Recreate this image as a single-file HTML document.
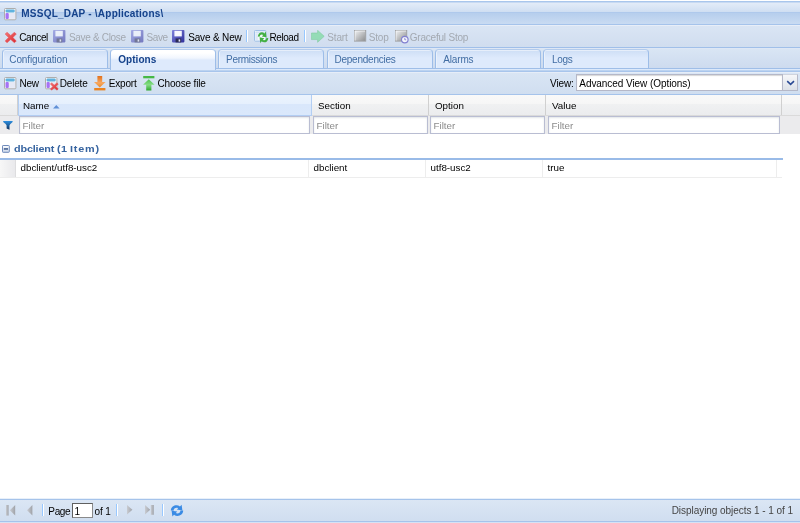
<!DOCTYPE html>
<html>
<head>
<meta charset="utf-8">
<title>MSSQL_DAP - \Applications\</title>
<style>
html,body{margin:0;padding:0;}
body{width:800px;height:523px;overflow:hidden;background:#fff;position:relative;font-family:"Liberation Sans",sans-serif;font-size:11px;color:#000;}
.abs{position:absolute;}
#wrap{position:absolute;left:0;top:0;width:800px;height:523px;will-change:transform;}
.t{position:absolute;white-space:nowrap;line-height:14px;height:14px;font-size:10px;}
.dis{color:#a3a9b1;}
#title{left:0;top:1px;width:800px;height:24px;box-sizing:border-box;border-top:1px solid #a9c6ec;border-bottom:1px solid #a5c3eb;background:linear-gradient(#c8daf2 0,#c8daf2 1px,#e3ecf8 1px,#cfdef2 10px,#afc9ec 10px,#afc9ec 11px,#b6ceed 11px,#c9dbf2 22px);}
#tb1{left:0;top:25px;width:800px;height:22px;background:linear-gradient(#e8eef8 0,#e8eef8 1px,#dae5f4 1px,#d0ddef 22px);border-bottom:1px solid #a0bfe9;box-sizing:content-box;}
#tabstrip{left:0;top:48px;width:800px;height:20px;background:linear-gradient(#dee7f5 0,#dee7f5 1px,#d9e5f4 1px,#cddbef 20px);}
#tabline{left:0;top:68px;width:800px;height:4px;background:linear-gradient(#9fbee8 0,#9fbee8 1px,#dce9fb 1px,#dce9fb 2px,#bcd3f0 2px,#bcd3f0 3px,#a8c5ec 3px,#a8c5ec 4px);}
.tab{position:absolute;top:49px;height:19px;width:106px;box-sizing:border-box;border:1px solid #9dbde8;border-top-color:#b3cbec;border-bottom:none;border-radius:4px 4px 0 0;background:linear-gradient(#e6eefa 0,#e6eefa 1px,#cfdff6 1px,#deeafc 8px,#deeafc 100%);box-shadow:inset 1px 0 0 #eaf1fb;}
.tab span{position:absolute;left:9px;top:2.5px;font-size:10px;line-height:14px;color:#416da3;white-space:nowrap;}
.tab.act{height:21px;background:linear-gradient(#fff 0,#fff 3px,#f1f6fe 8px,#deeafc 10px,#deeafc 100%);z-index:2;box-shadow:none;}
.tab.act span{font-weight:bold;color:#15428b;}
#tb2{left:0;top:72px;width:800px;height:23px;background:linear-gradient(#e6edf8 0,#e6edf8 1px,#d9e5f4 1px,#d0def0 22px);border-bottom:1px solid #a5c3eb;box-sizing:border-box;}
#hdr{left:0;top:95px;width:800px;height:21px;background:linear-gradient(#f9f9f9 0,#f6f6f6 9px,#f0f1f2 9px,#ebecee 20px);border-bottom:1px solid #dadada;box-sizing:border-box;}

.hc{position:absolute;top:0;height:20px;border-right:1px solid #d0d0d0;box-sizing:border-box;}
.hc span{position:absolute;left:6px;top:3.6px;font-size:9.8px;line-height:14px;white-space:nowrap;}
#frow{left:0;top:116px;width:800px;height:18px;background:#ebebed;}
.fi{position:absolute;top:0;height:18px;box-sizing:border-box;border:1px solid #b9bdd2;background:#fff;box-shadow:inset 0 1px 2px #e2e6e8;}
.fi span{position:absolute;left:2.5px;top:1.5px;font-size:9.8px;line-height:14px;color:#8c8c8c;}
#grp{left:0;top:141px;width:783px;height:19px;border-bottom:2px solid #99bbe8;box-sizing:border-box;}
#row{left:0;top:160px;width:782px;height:18px;border-bottom:1px solid #ededed;box-sizing:border-box;}
.c{position:absolute;top:0;height:17px;border-right:1px solid #ededed;box-sizing:border-box;}
.c span{position:absolute;left:4.5px;top:1px;font-size:9.8px;line-height:14px;white-space:nowrap;}
#pg{left:0;top:499px;width:800px;height:23px;background:linear-gradient(#dbe6f4,#d0def0);border-top:1px solid #a5c3ea;border-bottom:1px solid #a5c3eb;box-sizing:border-box;}
.sep{position:absolute;width:1px;height:14px;background:#98c8ff;border-right:1px solid #fff;}
</style>
</head>
<body>
<div id="wrap">
<div id="title" class="abs"></div>
<div id="tb1" class="abs"></div>
<div id="tabstrip" class="abs"></div>
<div id="tabline" class="abs"></div>
<div class="tab" style="left:2px"><span style="left:6.3px;letter-spacing:-0.11px">Configuration</span></div>
<div class="tab act" style="left:110px"><span style="left:7.2px;letter-spacing:0.05px">Options</span></div>
<div class="tab" style="left:218px"><span style="left:7.0px;letter-spacing:-0.29px">Permissions</span></div>
<div class="tab" style="left:327px"><span style="left:6.5px;letter-spacing:-0.24px">Dependencies</span></div>
<div class="tab" style="left:435px"><span style="left:7.2px;letter-spacing:-0.14px">Alarms</span></div>
<div class="tab" style="left:543px"><span style="left:7.9px;letter-spacing:-0.27px">Logs</span></div>
<div id="tb2" class="abs"></div>
<div id="hdr" class="abs">
  <div class="hc" style="left:0;width:18px"></div>
  <div class="hc" style="left:18px;width:294px;height:21px;background:linear-gradient(#ebf3fd 0,#e6f0fd 9px,#d9e7fb 9px,#dae8fb 20px);border-left:1px solid #b3cef3;border-bottom:1px solid #b3cef3;border-right-color:#b3cef3"><span style="left:4px">Name</span></div>
  <div class="hc" style="left:312px;width:117px"><span>Section</span></div>
  <div class="hc" style="left:429px;width:117px"><span>Option</span></div>
  <div class="hc" style="left:546px;width:236px"><span>Value</span></div>
</div>
<div id="frow" class="abs">
  <div class="fi" style="left:19px;width:291px"><span>Filter</span></div>
  <div class="fi" style="left:313px;width:115px"><span>Filter</span></div>
  <div class="fi" style="left:430px;width:115px"><span>Filter</span></div>
  <div class="fi" style="left:548px;width:232px"><span>Filter</span></div>
</div>
<div id="grp" class="abs"><span class="t" style="left:14px;top:1px;font-weight:bold;color:#3764a0;font-size:9.8px;letter-spacing:0.2px;word-spacing:-0.3px;transform:scaleX(1.105);transform-origin:0 0;"><span style="letter-spacing:-0.15px">dbclient</span> (1 <span style="letter-spacing:0.7px">Item)</span></span></div>
<div id="row" class="abs">
  <div class="c" style="left:0;width:16px;background:linear-gradient(90deg,#f7f7f7,#e9e9ec);border-right-color:#dddddf"></div>
  <div class="c" style="left:16px;width:293px"><span>dbclient/utf8-usc2</span></div>
  <div class="c" style="left:309px;width:117px"><span>dbclient</span></div>
  <div class="c" style="left:426px;width:117px"><span>utf8-usc2</span></div>
  <div class="c" style="left:543px;width:234px"><span>true</span></div>
</div>
<div id="pg" class="abs"></div>
<div class="abs" style="left:0;top:522px;width:800px;height:1px;background:#d5e2f5"></div>
<div class="abs" style="left:0;top:498px;width:800px;height:1px;background:#e8f0fa"></div>


<!-- icons -->
<svg width="0" height="0" style="position:absolute">
 <defs>
  <linearGradient id="gFl" x1="0" y1="0" x2="1" y2="1"><stop offset="0" stop-color="#7f83dc"/><stop offset="1" stop-color="#2f2f9c"/></linearGradient>
  <linearGradient id="gSq" x1="0" y1="0" x2="1" y2="1"><stop offset="0" stop-color="#f6f6f6"/><stop offset="1" stop-color="#808080"/></linearGradient>
  <linearGradient id="gX" x1="0" y1="0" x2="1" y2="1"><stop offset="0" stop-color="#f47a7a"/><stop offset="1" stop-color="#d9262c"/></linearGradient>
  <linearGradient id="gOr" x1="0" y1="0" x2="0" y2="1"><stop offset="0" stop-color="#e2701a"/><stop offset="0.6" stop-color="#f7a860"/><stop offset="1" stop-color="#e98a2c"/></linearGradient>
  <linearGradient id="gGr" x1="0" y1="0" x2="0" y2="1"><stop offset="0" stop-color="#4fc24f"/><stop offset="0.5" stop-color="#86dc86"/><stop offset="1" stop-color="#2fa82f"/></linearGradient>
  <linearGradient id="gFu" x1="0" y1="0" x2="0" y2="1"><stop offset="0" stop-color="#2d8fe0"/><stop offset="1" stop-color="#0e2f5c"/></linearGradient>
  <linearGradient id="gAr" x1="0" y1="0" x2="1" y2="0"><stop offset="0" stop-color="#c9ccd2"/><stop offset="1" stop-color="#9fa2a8"/></linearGradient>
  <linearGradient id="gBx" x1="0" y1="0" x2="0" y2="1"><stop offset="0" stop-color="#ffffff"/><stop offset="1" stop-color="#c9d6ea"/></linearGradient>
  
  
  
 </defs>
</svg>
<!-- title icon -->
<svg class="abs" style="left:4.4px;top:8.1px" width="13" height="13"><g><rect x="0.5" y="0.5" width="11.4" height="11.3" rx="0.9" fill="#f7f8fc" stroke="#adadad"/>
   <rect x="1.6" y="1.4" width="9.1" height="3.2" rx="1.1" fill="#5fb2de"/>
   <rect x="1.5" y="5" width="3.3" height="6" rx="1.1" fill="#a672f4"/>
   <rect x="5.3" y="5" width="5.7" height="5.9" fill="#e6e9f5"/></g></svg>
<!-- toolbar 1 -->
<svg class="abs" style="left:4.8px;top:31.5px" width="12" height="12"><g><path d="M2 0.2 L5.7 3.5 L9.4 0.2 L11.3 2.1 L7.9 5.5 L11.3 8.9 L9.4 10.8 L5.7 7.5 L2 10.8 L0.1 8.9 L3.5 5.5 L0.1 2.1 Z" fill="url(#gX)" stroke="#e8555a" stroke-width="0.5" stroke-linejoin="round"/></g></svg>
<svg class="abs" style="left:53.4px;top:29.6px;opacity:.58" width="13" height="13"><g><rect x="0" y="0" width="12.4" height="12.4" rx="0.8" fill="url(#gFl)"/>
   <rect x="2.4" y="0.8" width="7.4" height="5.6" fill="#f7f8ff"/>
   <rect x="3.6" y="8.4" width="5.6" height="4" fill="#2b2b55"/>
   <rect x="6.6" y="9.4" width="1.6" height="2.2" fill="#e8e8f8"/></g></svg>
<svg class="abs" style="left:131px;top:29.6px;opacity:.58" width="13" height="13"><g><rect x="0" y="0" width="12.4" height="12.4" rx="0.8" fill="url(#gFl)"/>
   <rect x="2.4" y="0.8" width="7.4" height="5.6" fill="#f7f8ff"/>
   <rect x="3.6" y="8.4" width="5.6" height="4" fill="#2b2b55"/>
   <rect x="6.6" y="9.4" width="1.6" height="2.2" fill="#e8e8f8"/></g></svg>
<svg class="abs" style="left:172.4px;top:29.6px" width="13" height="13"><g><rect x="0" y="0" width="12.4" height="12.4" rx="0.8" fill="url(#gFl)"/>
   <rect x="2.4" y="0.8" width="7.4" height="5.6" fill="#f7f8ff"/>
   <rect x="3.6" y="8.4" width="5.6" height="4" fill="#2b2b55"/>
   <rect x="6.6" y="9.4" width="1.6" height="2.2" fill="#e8e8f8"/></g></svg>
<div class="sep" style="left:246px;top:30px;height:12px"></div>
<svg class="abs" style="left:253.6px;top:30px" width="16" height="15">
  <rect x="0.5" y="0.5" width="11.4" height="10.6" rx="0.8" fill="#f4f8fd" stroke="#9dbfe6"/>
  <rect x="1.4" y="1.4" width="9.6" height="2" fill="#cfe2f6"/>
  <rect x="1.4" y="3.6" width="2.4" height="6.6" fill="#dbe8f8"/>
  <g transform="translate(-0.9,-1.9) scale(1.12,1.32)"><path d="M4.2 6.4 C4.6 3.2 8.2 2.4 10.2 4 L11.4 2.6 L12 7 L7.8 6.4 L9 5.2 C7.8 4.4 6.2 4.8 5.8 6.6 Z" fill="#43b043"/>
  <path d="M13.6 7.6 C13.2 10.8 9.6 11.6 7.6 10 L6.4 11.4 L5.8 7 L10 7.6 L8.8 8.8 C10 9.6 11.6 9.2 12 7.4 Z" fill="#43b043"/></g>
</svg>
<div class="sep" style="left:304px;top:30px;height:12px"></div>
<svg class="abs" style="left:311px;top:30.4px;opacity:.55" width="14" height="13">
  <path d="M0.4 3 H6.6 V0.3 L13.2 6.3 L6.6 12.3 V9.6 H0.4 Z" fill="#5fd886" stroke="#3cb860" stroke-width="0.6"/>
</svg>
<svg class="abs" style="left:353.6px;top:30.2px;opacity:.88" width="13" height="12"><rect x="0.5" y="0.5" width="11.2" height="10.6" fill="url(#gSq)" stroke="#9a9a9a"/><path d="M1 10.6 V1 H11" fill="none" stroke="#fafafa" stroke-width="0.8"/></svg>
<svg class="abs" style="left:394.8px;top:30.2px;opacity:.88" width="15" height="14"><rect x="0.5" y="0.5" width="11.2" height="10.6" fill="url(#gSq)" stroke="#9a9a9a"/><path d="M1 10.6 V1 H11" fill="none" stroke="#fafafa" stroke-width="0.8"/>
  <circle cx="9.8" cy="9.6" r="3.3" fill="#fbfbff" stroke="#7774cc" stroke-width="1.15"/><path d="M9.8 7.8 V9.8 H11.2" fill="none" stroke="#6f6cc4" stroke-width="0.8"/></svg>
<!-- toolbar 2 -->
<svg class="abs" style="left:4.4px;top:77.2px" width="13" height="13"><g><rect x="0.5" y="0.5" width="11.4" height="11.3" rx="0.9" fill="#f7f8fc" stroke="#adadad"/>
   <rect x="1.6" y="1.4" width="9.1" height="3.2" rx="1.1" fill="#5fb2de"/>
   <rect x="1.5" y="5" width="3.3" height="6" rx="1.1" fill="#a672f4"/>
   <rect x="5.3" y="5" width="5.7" height="5.9" fill="#e6e9f5"/></g></svg>
<svg class="abs" style="left:45px;top:77.2px" width="14" height="14"><g><rect x="0.5" y="0.5" width="11.4" height="11.3" rx="0.9" fill="#f7f8fc" stroke="#adadad"/>
   <rect x="1.6" y="1.4" width="9.1" height="3.2" rx="1.1" fill="#5fb2de"/>
   <rect x="1.5" y="5" width="3.3" height="6" rx="1.1" fill="#a672f4"/>
   <rect x="5.3" y="5" width="5.7" height="5.9" fill="#e6e9f5"/></g><g transform="translate(5.2,5.5) scale(0.72)"><g><path d="M2 0.2 L5.7 3.5 L9.4 0.2 L11.3 2.1 L7.9 5.5 L11.3 8.9 L9.4 10.8 L5.7 7.5 L2 10.8 L0.1 8.9 L3.5 5.5 L0.1 2.1 Z" fill="url(#gX)" stroke="#e8555a" stroke-width="0.5" stroke-linejoin="round"/></g></g></svg>
<svg class="abs" style="left:93.6px;top:76px" width="12" height="15">
  <path d="M3.4 0 H8.2 V6 H11.6 L5.8 11.4 L0 6 H3.4 Z" fill="url(#gOr)"/>
  <rect x="0.2" y="12" width="11.2" height="2.4" fill="#e98322"/>
</svg>
<svg class="abs" style="left:143px;top:76.2px" width="12" height="15">
  <rect x="0.2" y="0" width="11.2" height="2.3" fill="#46b846"/>
  <path d="M5.8 3.2 L11.6 8.8 H8.4 V14.4 H3.2 V8.8 H0 Z" fill="url(#gGr)"/>
</svg>
<!-- sort arrow -->
<svg class="abs" style="left:52.6px;top:105px" width="7" height="4"><path d="M0 3.4 L3.3 0 L6.6 3.4 Z" fill="#5f8fd6"/></svg>
<!-- filter funnel -->
<svg class="abs" style="left:3.2px;top:121.4px" width="11" height="10"><path d="M0.2 0 H9.6 V1.1 C8.2 2.4 6.7 3.4 6.5 4.6 V8.8 L3.6 7.6 V4.6 C3.4 3.4 1.8 2.4 0.2 1.1 Z" fill="url(#gFu)"/></svg>
<!-- group expander -->
<svg class="abs" style="left:2px;top:144.8px" width="8" height="8"><rect x="0.5" y="0.5" width="6.8" height="6.8" rx="0.6" fill="url(#gBx)" stroke="#6f8abb"/><rect x="1.8" y="3.3" width="4.2" height="1.3" fill="#1f3f7a"/></svg>
<!-- combo -->
<div class="abs" style="left:576px;top:74px;width:207px;height:17px;box-sizing:border-box;border:1px solid #b5b8c8;background:#fff;box-shadow:inset 0 1px 1px #d8d8d8;"></div>
<div class="abs" style="left:783px;top:74px;width:15px;height:17px;box-sizing:border-box;border:1px solid #b5b8c8;border-left:none;border-top-color:#d0d4de;background:linear-gradient(#f6f7f9,#dde1e8);"></div>
<svg class="abs" style="left:785.6px;top:79.6px" width="10" height="7"><path d="M1.2 1.2 L4.6 4.3 L8 1.2" fill="none" stroke="#2a4a94" stroke-width="1.6"/></svg>
<!-- pager -->
<svg class="abs" style="left:6px;top:505px" width="10" height="11"><rect x="0" y="0" width="2.6" height="10.6" fill="url(#gAr)"/><path d="M9.2 0 V10.6 L3.8 5.3 Z" fill="url(#gAr)"/></svg>
<svg class="abs" style="left:26.6px;top:505px" width="6" height="11"><path d="M5.4 0 V10.6 L0 5.3 Z" fill="url(#gAr)"/></svg>
<div class="sep" style="left:42px;top:504px;height:12px"></div>
<div class="abs" style="left:72px;top:503px;width:21px;height:15px;box-sizing:border-box;border:1px solid #5f5f5f;border-right-color:#8a8a8a;border-bottom-color:#8a8a8a;background:#fff;"></div>
<div class="sep" style="left:116px;top:504px;height:12px"></div>
<svg class="abs" style="left:127.4px;top:505.4px" width="6" height="10"><path d="M0 0 V9.6 L5.4 4.8 Z" fill="url(#gAr)"/></svg>
<svg class="abs" style="left:145.4px;top:505.4px" width="10" height="10"><path d="M0 0 V9.6 L5.2 4.8 Z" fill="url(#gAr)"/><rect x="5.8" y="0" width="3" height="9.8" fill="url(#gAr)"/></svg>
<div class="sep" style="left:162px;top:504px;height:12px"></div>
<svg class="abs" style="left:169.6px;top:504px" width="15" height="14">
  <path d="M0.8 6.6 C0.8 2 6.4 -0.4 10 2.4 L11.6 0.8 L12.4 6.4 L6.8 5.6 L8.2 4.2 C6.2 3 3.6 4.2 3.6 6.8 Z" fill="#3a8be4"/>
  <path d="M13.2 6.6 C13.2 11.2 7.6 13.6 4 10.8 L2.4 12.4 L1.6 6.8 L7.2 7.6 L5.8 9 C7.8 10.2 10.4 9 10.4 6.4 Z" fill="#3a8be4"/>
</svg>
<!-- text -->
<span class="t" style="left:21.3px;top:7px;font-weight:bold;color:#15428b;letter-spacing:0.22px;">MSSQL_DAP - \Applications\</span>
<span class="t" style="left:19.3px;top:30.5px;letter-spacing:-0.44px;">Cancel</span>
<span class="t" style="left:68.9px;top:30.5px;letter-spacing:-0.31px;color:#a3a9b1;">Save &amp; Close</span>
<span class="t" style="left:146.5px;top:30.5px;letter-spacing:-0.42px;color:#a3a9b1;">Save</span>
<span class="t" style="left:188.2px;top:30.5px;letter-spacing:-0.16px;">Save &amp; New</span>
<span class="t" style="left:269.5px;top:30.5px;letter-spacing:-0.45px;">Reload</span>
<span class="t" style="left:327.3px;top:30.5px;letter-spacing:-0.16px;color:#a3a9b1;">Start</span>
<span class="t" style="left:368.7px;top:30.5px;letter-spacing:-0.19px;color:#a3a9b1;">Stop</span>
<span class="t" style="left:409.7px;top:30.5px;letter-spacing:-0.2px;color:#a3a9b1;">Graceful Stop</span>
<span class="t" style="left:19.5px;top:77px;letter-spacing:-0.24px;">New</span>
<span class="t" style="left:59.7px;top:77px;letter-spacing:-0.17px;">Delete</span>
<span class="t" style="left:108.7px;top:77px;letter-spacing:-0.17px;">Export</span>
<span class="t" style="left:157.5px;top:77px;letter-spacing:-0.17px;">Choose file</span>
<span class="t" style="left:550.1px;top:77px;letter-spacing:-0.16px;">View:</span>
<span class="t" style="left:579.3px;top:77px;letter-spacing:-0.06px;">Advanced View (Options)</span>
<span class="t" style="left:48.3px;top:505px;letter-spacing:-0.34px;">Page</span>
<span class="t" style="left:74.5px;top:505px;">1</span>
<span class="t" style="left:94.5px;top:505px;letter-spacing:-0.1px;">of 1</span>
<span class="t" style="left:671.7px;top:504px;letter-spacing:-0.05px;color:#444;">Displaying objects 1 - 1 of 1</span>
</div>
</body>
</html>
